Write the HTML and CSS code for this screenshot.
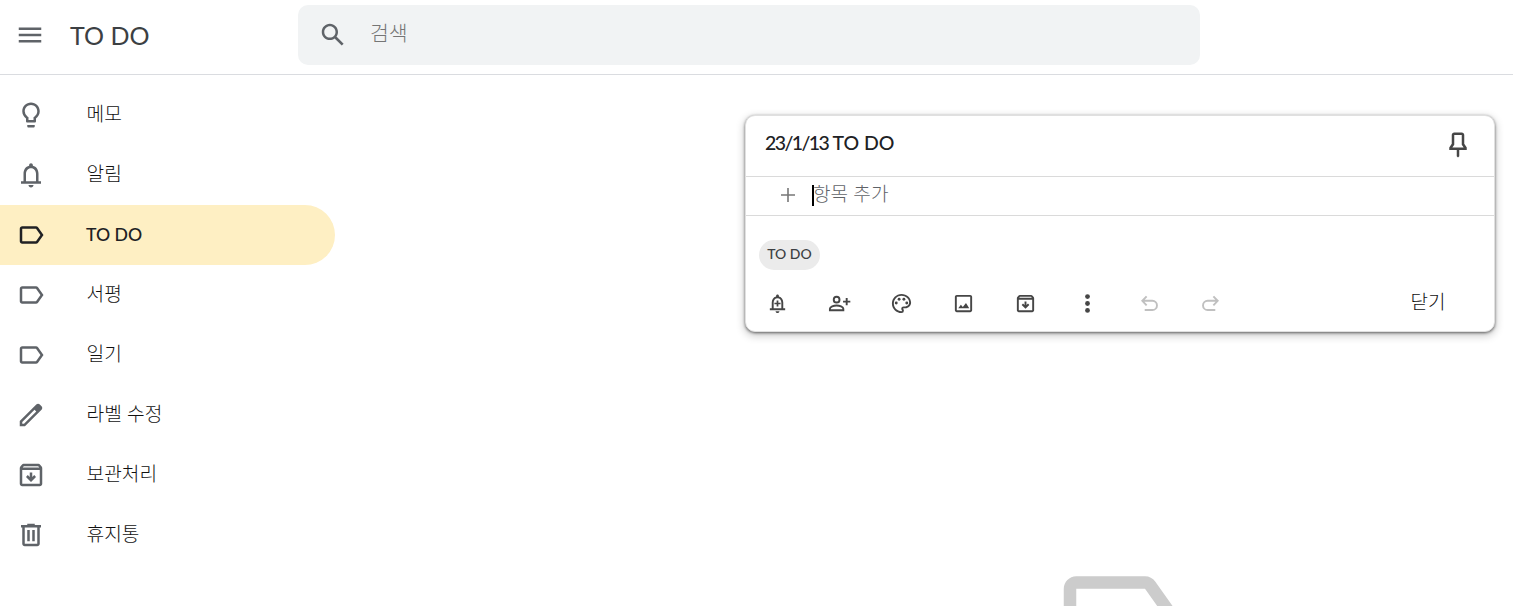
FILE: index.html
```html
<!DOCTYPE html>
<html lang="ko">
  <head>
    <meta charset="utf-8">
    <title>TO DO</title>
    <meta name="viewport" content="width=device-width, initial-scale=1.0">
    <link rel="stylesheet" href="styles.css">
  </head>
  <body>
    <svg class="defs">
      <symbol id="label" viewBox="0 0 24 24"><path d="M17.63 5.84C17.27 5.33 16.67 5 16 5H5c-1.1 0-2 .9-2 2v10c0 1.1.9 2 2 2h11c.67 0 1.27-.33 1.63-.84L22 12l-4.37-6.16zM16 17H5V7h11l3.55 5L16 17z"/></symbol>
      <symbol id="archive" viewBox="0 0 24 24"><path d="M20.54 5.23l-1.39-1.68C18.88 3.21 18.47 3 18 3H6c-.47 0-.88.21-1.16.55L3.46 5.23C3.17 5.57 3 6.02 3 6.5V19c0 1.1.89 2 2 2h14c1.1 0 2-.9 2-2V6.5c0-.48-.17-.93-.46-1.27zM6.24 5h11.52l.83 1H5.42l.82-1zM5 19V8h14v11H5zm11-5.5l-4 4-4-4 1.41-1.41L11 13.67V10h2v3.67l1.59-1.58L16 13.5z"/></symbol>
    </svg>

    <header class="header">
      <svg class="icon" viewBox="0 0 24 24"><path d="M3 18h18v-2H3v2zm0-5h18v-2H3v2zm0-7v2h18V6H3z"/></svg>
      <h1 class="title">TO DO</h1>
      <div class="search">
        <svg class="icon" viewBox="0 0 24 24"><path d="M20.49 19l-5.73-5.73C15.53 12.2 16 10.91 16 9.5 16 5.91 13.09 3 9.5 3S3 5.91 3 9.5 5.91 16 9.5 16c1.41 0 2.7-.47 3.77-1.24L19 20.49 20.49 19zM5 9.5C5 7.01 7.01 5 9.5 5S14 7.01 14 9.5 11.99 14 9.5 14 5 11.99 5 9.5z"/></svg>
        <span class="search__text">검색</span>
      </div>
    </header>

    <div class="page">
      <nav class="nav">
        <a class="nav__item">
          <svg class="icon" viewBox="0 0 24 24"><path d="M9 21c0 .55.45 1 1 1h4c.55 0 1-.45 1-1v-1H9v1zm3-19C8.14 2 5 5.14 5 9c0 2.38 1.19 4.47 3 5.74V17c0 .55.45 1 1 1h6c.55 0 1-.45 1-1v-2.26c1.81-1.27 3-3.36 3-5.74 0-3.86-3.14-7-7-7zm2.85 11.1l-.85.6V16h-4v-2.3l-.85-.6A4.997 4.997 0 0 1 7 9c0-2.76 2.24-5 5-5s5 2.24 5 5c0 1.63-.8 3.16-2.15 4.1z"/></svg>
          <span class="nav__text">메모</span>
        </a>
        <a class="nav__item">
          <svg class="icon" viewBox="0 0 24 24"><path d="M18 17v-6c0-3.07-1.63-5.64-4.5-6.32V4c0-.83-.67-1.5-1.5-1.5s-1.5.67-1.5 1.5v.68C7.64 5.36 6 7.92 6 11v6H4v2h16v-2h-2zm-2 0H8v-6c0-2.48 1.51-4.5 4-4.5s4 2.02 4 4.5v6zm-4 5c1.1 0 2-.9 2-2h-4c0 1.1.9 2 2 2z"/></svg>
          <span class="nav__text">알림</span>
        </a>
        <a class="nav__item nav__item--active">
          <svg class="icon"><use href="#label"/></svg>
          <span class="nav__text nav__text--latin">TO DO</span>
        </a>
        <a class="nav__item">
          <svg class="icon"><use href="#label"/></svg>
          <span class="nav__text">서평</span>
        </a>
        <a class="nav__item">
          <svg class="icon"><use href="#label"/></svg>
          <span class="nav__text">일기</span>
        </a>
        <a class="nav__item">
          <svg class="icon" viewBox="0 0 24 24"><path d="M20.41 4.94l-1.35-1.35c-.78-.78-2.05-.78-2.83 0L3 16.82V21h4.18L20.41 7.77c.79-.78.79-2.05 0-2.83zm-14 14.12L5 19v-1.36l9.82-9.82 1.41 1.41-9.82 9.83z"/></svg>
          <span class="nav__text">라벨 수정</span>
        </a>
        <a class="nav__item">
          <svg class="icon"><use href="#archive"/></svg>
          <span class="nav__text">보관처리</span>
        </a>
        <a class="nav__item">
          <svg class="icon" viewBox="0 0 24 24"><path d="M15 4V3H9v1H4v2h1v13c0 1.1.9 2 2 2h10c1.1 0 2-.9 2-2V6h1V4h-5zm2 15H7V6h10v13zM9 8h2v9H9zm4 0h2v9h-2z"/></svg>
          <span class="nav__text">휴지통</span>
        </a>
      </nav>

      <main class="main">
        <section class="note">
          <div class="note__head">
            <h2 class="note__title"><span class="note__date">23/1/13</span> TO DO</h2>
            <svg class="icon icon--dark" viewBox="0 0 24 24"><path d="M17 4v7l2 3v2h-6v5l-1 1-1-1v-5H5v-2l2-3V4c0-1.1.9-2 2-2h6c1.11 0 2 .89 2 2zM9 4v7.75L7.5 14h9L15 11.75V4H9z"/></svg>
          </div>
          <div class="note__add">
            <svg class="plus" viewBox="0 0 16 16"><path d="M8 1v14M1 8h14"/></svg>
            <span class="caret"></span>
            <span class="note__placeholder">항목 추가</span>
          </div>
          <div class="note__labels"><span class="chip">TO DO</span></div>
          <div class="tools">
            <span class="tool"><svg class="tool__icon" viewBox="0 0 24 24"><path d="M18 17v-6c0-3.07-1.63-5.64-4.5-6.32V4c0-.83-.67-1.5-1.5-1.5s-1.5.67-1.5 1.5v.68C7.64 5.36 6 7.92 6 11v6H4v2h16v-2h-2zm-2 0H8v-6c0-2.48 1.51-4.5 4-4.5s4 2.02 4 4.5v6zm-4 5c1.1 0 2-.9 2-2h-4c0 1.1.9 2 2 2zM11.100 8.800h1.800v2.300h2.300v1.800h-2.300v2.300h-1.800v-2.300H8.800v-1.800h2.300z"/></svg></span>
            <span class="tool"><svg class="tool__icon tool__icon--line" viewBox="0 0 24 24"><circle cx="9" cy="8" r="3"/><path d="M2 19v-1.500c0-2.300 4-3.500 7-3.500s7 1.200 7 3.500V19zM19.500 6.200v7.600M15.700 10h7.600"/></svg></span>
            <span class="tool"><svg class="tool__icon" viewBox="0 0 24 24"><path d="M12 22C6.49 22 2 17.51 2 12S6.49 2 12 2s10 4.04 10 9c0 3.31-2.69 6-6 6h-1.77c-.28 0-.5.22-.5.5 0 .12.05.23.13.33.41.47.64 1.06.64 1.67A2.5 2.5 0 0 1 12 22zm0-18c-4.41 0-8 3.59-8 8s3.59 8 8 8c.28 0 .5-.22.5-.5a.54.54 0 0 0-.14-.35c-.41-.46-.63-1.05-.63-1.65a2.5 2.5 0 0 1 2.500-2.500H16c2.210 0 4-1.790 4-4 0-3.860-3.590-7-8-7z"/><circle cx="6.500" cy="11.500" r="1.500"/><circle cx="9.500" cy="7.500" r="1.500"/><circle cx="14.500" cy="7.500" r="1.500"/><circle cx="17.500" cy="11.500" r="1.500"/></svg></span>
            <span class="tool"><svg class="tool__icon" viewBox="0 0 24 24"><path d="M19 5v14H5V5h14m0-2H5c-1.100 0-2 .9-2 2v14c0 1.100.9 2 2 2h14c1.100 0 2-.9 2-2V5c0-1.100-.9-2-2-2zM6.500 17l2.800-3.800 2 2.400 3.300-4L18 17z"/></svg></span>
            <span class="tool"><svg class="tool__icon"><use href="#archive"/></svg></span>
            <span class="tool"><svg class="tool__icon" viewBox="0 0 24 24"><circle cx="12" cy="4.800" r="2.500"/><circle cx="12" cy="12" r="2.500"/><circle cx="12" cy="19.200" r="2.500"/></svg></span>
            <span class="tool"><svg class="tool__icon tool__icon--line tool__icon--off" viewBox="0 0 24 24"><path d="M9 4.500L4.500 9.200 9 14M4.500 9.200H15a4.800 4.800 0 0 1 0 9.600H7"/></svg></span>
            <span class="tool tool--redo"><svg class="tool__icon tool__icon--line tool__icon--off" viewBox="0 0 24 24"><path d="M15 4.500l4.500 4.700L15 14M19.500 9.200H9a4.800 4.800 0 0 0 0 9.600h8"/></svg></span>
            <span class="close">닫기</span>
          </div>
        </section>
        <svg class="empty"><use href="#label"/></svg>
      </main>
    </div>
  </body>
</html>
```
FILE: styles.css
```css
* {
  box-sizing: border-box;
}

html, body {
  margin: 0;
  padding: 0;
}

body {
  height: 100vh;
  overflow: hidden;
  background-color: #fff;
  color: #202124;
  font-family: Lato, "Noto Sans CJK KR", sans-serif;
}

.defs {
  display: none;
}

.icon {
  flex: none;
  width: 30px;
  height: 30px;
  fill: #5f6368;
}

.icon--dark {
  margin-top: 1px;
  fill: #464646;
}

.header {
  display: flex;
  align-items: center;
  height: 75px;
  padding: 0 0 5px 15px;
  border-bottom: 1px solid #dadce0;
}

.title {
  width: 253px;
  margin: 0;
  padding-left: 25px;
  color: #3c4043;
  font-size: 25px;
  font-weight: 400;
  line-height: 30px;
}

.search {
  display: flex;
  align-items: center;
  width: 902px;
  height: 60px;
  padding-left: 20px;
  border-radius: 10px;
  background-color: #f1f3f4;
}

.search__text {
  margin: 0 0 4px 22px;
  color: #757575;
  font-size: 20.5px;
  font-weight: 300;
  line-height: 30px;
}

.page {
  display: flex;
  height: calc(100vh - 75px);
  overflow: hidden;
}

.nav {
  width: 335px;
  padding-top: 10px;
}

.nav__item {
  display: flex;
  align-items: center;
  height: 60px;
  padding-left: 16px;
  border-radius: 0 30px 30px 0;
}

.nav__item--active {
  background-color: #feefc3;
}

.nav__item--active .icon {
  fill: #202124;
}

.nav__text {
  margin: 0 0 2px 40.5px;
  color: #111;
  font-size: 19.2px;
  font-weight: 300;
  line-height: 30px;
}

.nav__text--latin {
  margin: 0 0 1px 40px;
  color: #202124;
  font-size: 17.7px;
  font-weight: 500;
}

.main {
  display: flex;
  flex-direction: column;
  align-items: center;
  width: 750px;
  margin-left: 410px;
  padding-top: 40px;
}

.note {
  flex: none;
  width: 750px;
  height: 217px;
  border: 1px solid #e0e0e0;
  border-radius: 10px;
  background-color: #fff;
  box-shadow: 0 1px 3px rgba(0, 0, 0, .55), 0 3px 8px 1px rgba(0, 0, 0, .2);
}

.note__head {
  display: flex;
  justify-content: space-between;
  height: 61px;
  padding: 13px 21px 0 19px;
  border-bottom: 1px solid #dadada;
}

.note__title {
  margin: -1px 0 0;
  font-size: 19.5px;
  font-weight: 500;
  line-height: 30px;
}

.note__date {
  letter-spacing: -1.6px;
}

.note__add {
  display: flex;
  align-items: center;
  height: 39px;
  padding: 0 0 2px 34px;
  border-bottom: 1px solid #dadada;
}

.plus {
  width: 16px;
  height: 16px;
  fill: none;
  stroke: #777;
  stroke-width: 1.6;
}

.caret {
  width: 2px;
  height: 21px;
  margin-left: 16px;
  background-color: #000;
}

.note__placeholder {
  margin: 0 0 4px -1px;
  color: #5f6368;
  font-size: 19.1px;
  font-weight: 300;
}

.note__labels {
  display: flex;
  padding: 24px 13px 0;
}

.chip {
  width: 61px;
  height: 30px;
  border-radius: 15px;
  background-color: #ebebeb;
  color: #3c4043;
  font-size: 14px;
  font-weight: 500;
  line-height: 28px;
  text-align: center;
}

.tools {
  display: flex;
  align-items: center;
  height: 40px;
  margin-top: 13px;
}

.tool {
  display: flex;
  justify-content: center;
  width: 62px;
}

.tool--redo {
  padding-right: 2px;
}

.tool__icon {
  width: 23px;
  height: 23px;
  fill: #464646;
}

.tool__icon--line {
  fill: none;
  stroke: #464646;
  stroke-width: 2;
}

.tool__icon--off {
  stroke: #c0c0c0;
}

.close {
  margin: 0 48.5px 6px auto;
  color: #111;
  font-size: 19px;
  font-weight: 300;
}

.empty {
  flex: none;
  width: 150px;
  height: 150px;
  margin-top: 213px;
  fill: #ccc;
}
```
